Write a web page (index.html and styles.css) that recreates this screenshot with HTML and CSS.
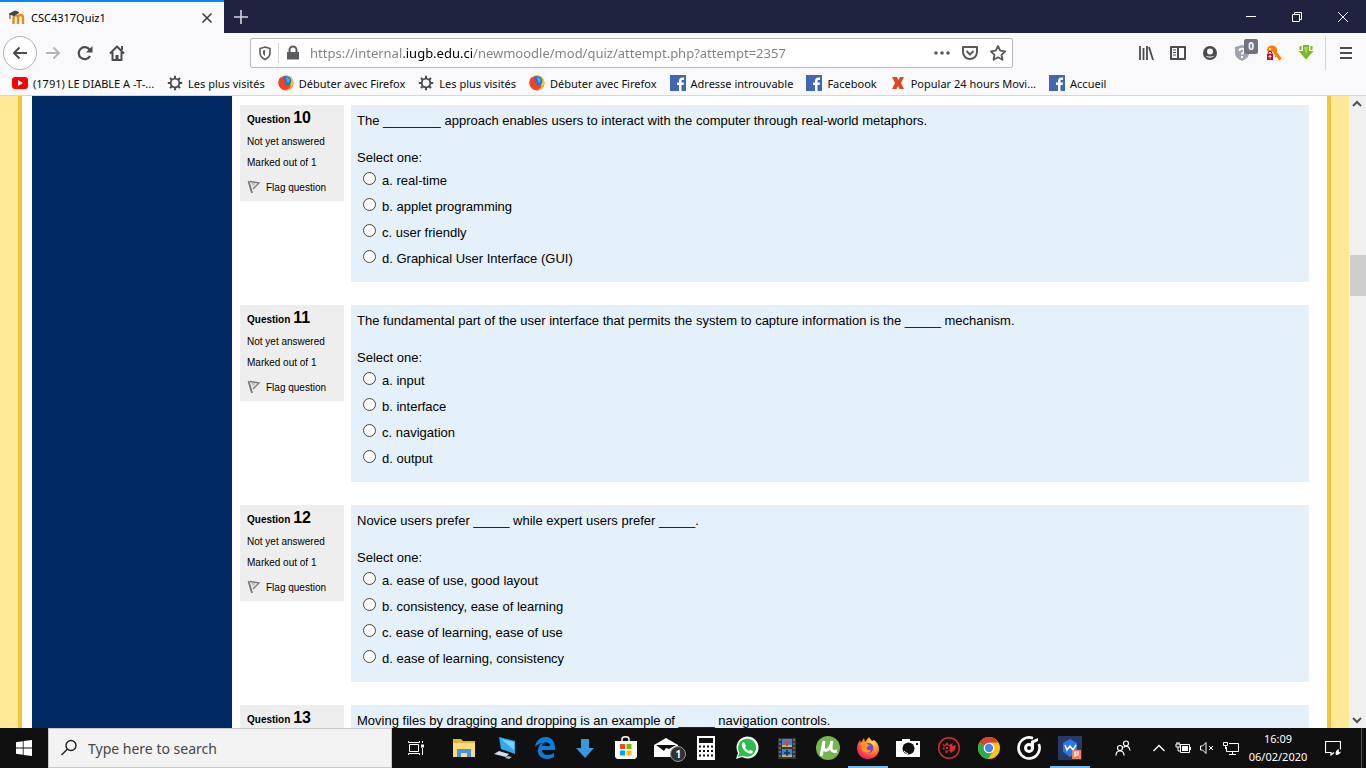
FILE: index.html
```html
<!DOCTYPE html>
<html lang="en">

  <head>
    <meta charset="utf-8">
    <title>CSC4317Quiz1</title>
    <link rel="stylesheet" href="styles.css">
  </head>

  <body>
    <!-- shared icons -->
    <svg class="icon-defs" aria-hidden="true">
      <defs>
        <radialGradient id="fox-body" cx="70%" cy="25%" r="85%">
          <stop offset="0" stop-color="#ffe14a"/>
          <stop offset=".45" stop-color="#ff9020"/>
          <stop offset=".8" stop-color="#fb3750"/>
          <stop offset="1" stop-color="#e31587"/>
        </radialGradient>
        <symbol id="icon-fox" viewBox="0 0 24 24">
          <path d="M12 23C5 23 1 18 1 12c0-4 2-6 3-8l1 2.500L8 2l1 4 4-5 3 4 2-1c3 2 5 5 5 9 0 6-5 10-11 10z" fill="url(#fox-body)"/>
          <circle cx="12.500" cy="12" r="5" fill="#7542e5"/>
          <path d="M3 8c3-2 6-2 8 0l3 1-3 2c-1 2 1 4 4 3 0 3-6 4-9 0-1-2-1-4 0-5z" fill="#ff9820"/>
        </symbol>
        <symbol id="icon-fox-old" viewBox="0 0 16 16">
          <circle cx="8" cy="8" r="7.500" fill="#f5552b"/>
          <path d="M8 .5c6 0 8 5 7 9-1 3-4 6-7 6 3-2 5-4 4-8z" fill="#ffc32b"/>
          <circle cx="8.500" cy="6" r="4.800" fill="#1c75d2"/>
          <path d="M8 2l4 2-1 4-2-1z" fill="#31b7ef"/>
          <path d="M1 4l2-2 1 2 3 1-1 2 3 1-2 2c1 2 4 2 6 0-1 5-8 6-11 2-2-2-2-5-1-8z" fill="#f4411f"/>
        </symbol>
        <symbol id="icon-gear" viewBox="0 0 16 16">
          <circle cx="8" cy="8" r="4.300" fill="none" stroke="#4a4a4f" stroke-width="1.800"/>
          <path d="M8 .8v3M8 12.200v3M.8 8h3M12.200 8h3M3 3l2 2M11 11l2 2M3 13l2-2M11 5l2-2" stroke="#4a4a4f" stroke-width="2"/>
        </symbol>
        <symbol id="icon-fb" viewBox="0 0 16 16">
          <path d="M0 0h16v16H0z" fill="#4267b2"/>
          <path d="M9 16v-6H7V7.500h2V6c0-2.200 1.300-3.500 3.300-3.500H14V5h-1.300C11.700 5 11.500 5.500 11.500 6.200v1.300H14l-.4 2.500h-2.100v6z" fill="#fff"/>
        </symbol>
        <symbol id="icon-flag" viewBox="0 0 14 14">
          <path d="M1.500 1L5 13" fill="none" stroke="#777" stroke-width="1.800"/>
          <path d="M3 1.500l9 1.500-6 6" fill="none" stroke="#777" stroke-width="1.300"/>
          <path d="M4.500 3l4 .5L6 6.500z" fill="#bbb"/>
        </symbol>
      </defs>
    </svg>

    <header class="browser">
      <div class="tab-strip">
        <div class="tab">
          <svg class="icon-16" viewBox="0 0 16 16">
            <path d="M4.500 14V8c0-3.500 4.500-3.500 4.500 0v6M9 14V8c0-4 5-4 5 0v6" fill="none" stroke="#e98b12" stroke-width="2.400"/>
            <path d="M0 4l6-3 4 1.500L5 5.500zM1 4v5" fill="#444" stroke="#444"/>
          </svg>
          <span class="tab-title">CSC4317Quiz1</span>
          <button class="tab-close" aria-label="Close tab">
            <svg class="icon-16" viewBox="0 0 16 16"><path d="M3.500 3.500l9 9m0-9l-9 9" stroke="#38383d" stroke-width="1.500"/></svg>
          </button>
        </div>
        <button class="new-tab" aria-label="New tab">
          <svg class="icon-16" viewBox="0 0 16 16"><path d="M8 1v14M1 8h14" stroke="#d5d5df" stroke-width="1.600"/></svg>
        </button>
        <div class="window-buttons">
          <button aria-label="Minimize"><svg viewBox="0 0 12 12"><path d="M1 5.500h10" stroke="#fff"/></svg></button>
          <button aria-label="Restore"><svg viewBox="0 0 12 12"><path d="M1.500 3.500h7v7h-7zM3.500 3.500v-2h7v7h-2" fill="none" stroke="#fff"/></svg></button>
          <button aria-label="Close"><svg viewBox="0 0 12 12"><path d="M1 1l10 10M11 1L1 11" stroke="#fff"/></svg></button>
        </div>
      </div>

      <nav class="toolbar">
        <button class="tool back" aria-label="Back">
          <svg viewBox="0 0 16 16"><path d="M15 8H2M7.500 2.500L2 8l5.500 5.500" fill="none" stroke="#4a4a4f" stroke-width="2"/></svg>
        </button>
        <button class="tool" aria-label="Forward">
          <svg viewBox="0 0 16 16"><path d="M1 8h13M8.500 2.500L14 8l-5.500 5.500" fill="none" stroke="#b5b5b9" stroke-width="2"/></svg>
        </button>
        <button class="tool" aria-label="Reload">
          <svg viewBox="0 0 16 16"><path d="M13 11A6 6 0 1 1 12.500 4.500" fill="none" stroke="#4a4a4f" stroke-width="2.200"/><path d="M15.500 1v6.500H9z" fill="#4a4a4f"/></svg>
        </button>
        <button class="tool" aria-label="Home">
          <svg viewBox="0 0 16 16"><path d="M1 8.500l7-7 7 7M3.500 7v8h9V7" fill="none" stroke="#4a4a4f" stroke-width="2" stroke-linejoin="round"/><path d="M6.500 10h3v5h-3zM12 1h2v4h-2z" fill="#4a4a4f"/></svg>
        </button>

        <div class="url-bar">
          <button class="url-icon shield" aria-label="Tracking protection">
            <svg viewBox="0 0 16 16"><path d="M8 2l5 1.500V8c0 3-2 5-5 6.500C5 13 3 11 3 8V3.500z" fill="none" stroke="#5a5a5e" stroke-width="1.600"/><path d="M8 5v6c-1.500-1-2-2-2-3V5.500z" fill="#5a5a5e"/></svg>
          </button>
          <button class="url-icon" aria-label="Site information">
            <svg viewBox="0 0 16 16"><path d="M2 7h12v7.500H2z" fill="#5a5a5e"/><path d="M4.500 8V5a3.500 3.500 0 0 1 7 0v3" fill="none" stroke="#5a5a5e" stroke-width="2"/></svg>
          </button>
          <input class="url-input" type="text" aria-label="Address" value="https://internal.iugb.edu.ci/newmoodle/mod/quiz/attempt.php?attempt=2357">
          <button class="url-icon" aria-label="Page actions">
            <svg viewBox="0 0 16 16"><g fill="#5a5a5e"><circle cx="2" cy="8" r="1.800"/><circle cx="8" cy="8" r="1.800"/><circle cx="14" cy="8" r="1.800"/></g></svg>
          </button>
          <button class="url-icon" aria-label="Save to Pocket">
            <svg viewBox="0 0 16 16"><path d="M1 2h14v5c0 4-3 7-7 7S1 11 1 7z" fill="none" stroke="#5a5a5e" stroke-width="2" stroke-linejoin="round"/><path d="M4.500 6L8 9.500 11.500 6" fill="none" stroke="#5a5a5e" stroke-width="2"/></svg>
          </button>
          <button class="url-icon" aria-label="Bookmark this page">
            <svg viewBox="0 0 16 16"><path d="M8 1l2.200 4.700 5 .6-3.700 3.500 1 5L8 12.300l-4.500 2.500 1-5L.8 6.300l5-.6z" fill="none" stroke="#5a5a5e" stroke-width="1.800" stroke-linejoin="round"/></svg>
          </button>
        </div>

        <button class="tool" aria-label="Library">
          <svg viewBox="0 0 16 16"><path d="M2 1v14M5.500 3v12M9 1v14M11 2l4 13" stroke="#4a4a4f" stroke-width="1.800"/></svg>
        </button>
        <button class="tool" aria-label="Sidebars">
          <svg viewBox="0 0 16 16"><path d="M1 2h14v12H1zM8 2v12" fill="none" stroke="#4a4a4f" stroke-width="2" stroke-linejoin="round"/><path d="M3 5h3M3 7.500h3M3 10h3" stroke="#4a4a4f"/></svg>
        </button>
        <button class="tool" aria-label="Account">
          <svg viewBox="0 0 16 16"><circle cx="8" cy="8" r="7" fill="#4a4a4f"/><circle cx="8" cy="6.500" r="3" fill="#f9f9fb"/><path d="M3.500 10.500c2 3 7 3 9 0-2 1.300-7 1.300-9 0z" fill="#f9f9fb"/></svg>
        </button>
        <button class="tool with-badge" aria-label="Tracker alerts">
          <svg viewBox="0 0 16 16"><path d="M8 0l7 2v6c0 4-3 6-7 8-4-2-7-4-7-8V2z" fill="#9fa3ae"/><path d="M5.500 6c0-3 5-3 5 0 0 1.500-2.500 1.500-2.500 3.500M8 11v2" fill="none" stroke="#fff" stroke-width="2"/></svg>
          <span class="badge">0</span>
        </button>
        <button class="tool" aria-label="Key manager">
          <svg viewBox="0 0 16 16"><path d="M8 6l6.500 8.500" stroke="#ff7a00" stroke-width="3"/><path d="M12 9l-3 3" stroke="#ff7a00" stroke-width="1.500"/><path d="M1 6V4c1-4 8-5 10 0v4H8L6 6z" fill="#ff7a00"/><circle cx="4" cy="4" r="1" fill="#fff"/><path d="M1 8.500h6V15H1z" fill="#c0092b"/><path d="M2.500 8V6.500h3V8" fill="none" stroke="#c0092b"/><path d="M4 10v3.500M2.500 11.500h3" stroke="#fff"/></svg>
        </button>
        <button class="tool" aria-label="Download helper">
          <svg viewBox="0 0 16 16"><path d="M5 0h6v6h4.500L8 14.500.5 6H5z" fill="#79b926"/><path d="M2.500 1v4M13.500 1v4" stroke="#79b926" stroke-width="2"/><path d="M6 2l2 8 2-8z" fill="#a7dc50"/></svg>
        </button>
        <button class="tool menu" aria-label="Menu">
          <svg viewBox="0 0 16 16"><path d="M2 3h12M2 8h12M2 13h12" stroke="#4a4a4f" stroke-width="2"/></svg>
        </button>
      </nav>

      <div class="bookmarks">
        <a href="#"><svg class="icon-16" viewBox="0 0 16 16"><rect y="2" width="16" height="12" rx="3" fill="#f00"/><path d="M6 5l5 3-5 3z" fill="#fff"/></svg>(1791) LE DIABLE A -T-...</a>
        <a href="#"><svg class="icon-16"><use href="#icon-gear"/></svg>Les plus visités</a>
        <a href="#"><svg class="icon-16"><use href="#icon-fox-old"/></svg>Débuter avec Firefox</a>
        <a href="#"><svg class="icon-16"><use href="#icon-gear"/></svg>Les plus visités</a>
        <a href="#"><svg class="icon-16"><use href="#icon-fox-old"/></svg>Débuter avec Firefox</a>
        <a href="#"><svg class="icon-16"><use href="#icon-fb"/></svg>Adresse introuvable</a>
        <a href="#"><svg class="icon-16"><use href="#icon-fb"/></svg>Facebook</a>
        <a href="#"><svg class="icon-16" viewBox="0 0 16 16"><path d="M2 2h5l1.500 3L10 2h4l-3 6 3 6H9.500L8 11l-1.500 3H2l3-6z" fill="#dc4a24"/></svg>Popular 24 hours Movi...</a>
        <a href="#"><svg class="icon-16"><use href="#icon-fb"/></svg>Accueil</a>
      </div>
    </header>

    <div class="viewport">
      <div class="page-edge left"></div>
      <aside class="sidebar"></aside>

      <main class="quiz">
        <section class="question">
          <div class="info">
            <h3>Question <span class="number">10</span></h3>
            <p>Not yet answered</p>
            <p>Marked out of 1</p>
            <a class="flag" href="#"><svg><use href="#icon-flag"/></svg>Flag question</a>
          </div>
          <div class="content">
            <p class="text">The ________ approach enables users to interact with the computer through real-world metaphors.</p>
            <p class="prompt">Select one:</p>
            <label><input type="radio" name="q10">a. real-time</label>
            <label><input type="radio" name="q10">b. applet programming</label>
            <label><input type="radio" name="q10">c. user friendly</label>
            <label><input type="radio" name="q10">d. Graphical User Interface (GUI)</label>
          </div>
        </section>

        <section class="question">
          <div class="info">
            <h3>Question <span class="number">11</span></h3>
            <p>Not yet answered</p>
            <p>Marked out of 1</p>
            <a class="flag" href="#"><svg><use href="#icon-flag"/></svg>Flag question</a>
          </div>
          <div class="content">
            <p class="text">The fundamental part of the user interface that permits the system to capture information is the _____ mechanism.</p>
            <p class="prompt">Select one:</p>
            <label><input type="radio" name="q11">a. input</label>
            <label><input type="radio" name="q11">b. interface</label>
            <label><input type="radio" name="q11">c. navigation</label>
            <label><input type="radio" name="q11">d. output</label>
          </div>
        </section>

        <section class="question">
          <div class="info">
            <h3>Question <span class="number">12</span></h3>
            <p>Not yet answered</p>
            <p>Marked out of 1</p>
            <a class="flag" href="#"><svg><use href="#icon-flag"/></svg>Flag question</a>
          </div>
          <div class="content">
            <p class="text">Novice users prefer _____ while expert users prefer _____.</p>
            <p class="prompt">Select one:</p>
            <label><input type="radio" name="q12">a. ease of use, good layout</label>
            <label><input type="radio" name="q12">b. consistency, ease of learning</label>
            <label><input type="radio" name="q12">c. ease of learning, ease of use</label>
            <label><input type="radio" name="q12">d. ease of learning, consistency</label>
          </div>
        </section>

        <section class="question">
          <div class="info">
            <h3>Question <span class="number">13</span></h3>
          </div>
          <div class="content">
            <p class="text">Moving files by dragging and dropping is an example of _____ navigation controls.</p>
          </div>
        </section>
      </main>

      <div class="page-edge right"></div>
      <div class="scrollbar">
        <svg viewBox="0 0 16 16"><path d="M4 10l4-4 4 4" fill="none" stroke="#505050" stroke-width="2"/></svg>
        <div class="thumb"></div>
        <svg class="down" viewBox="0 0 16 16"><path d="M4 6l4 4 4-4" fill="none" stroke="#505050" stroke-width="2"/></svg>
      </div>
    </div>

    <footer class="taskbar">
      <button class="start" aria-label="Start">
        <svg class="icon-16" viewBox="0 0 16 16"><path d="M0 2.200l6.800-1v6.400H0zM7.600 1.100L16 0v7.600H7.600zM0 8.400h6.800v6.400l-6.800-1zM7.600 8.400H16V16l-8.400-1.100z" fill="#fff"/></svg>
      </button>
      <label class="search">
        <svg viewBox="0 0 18 18"><circle cx="11" cy="6.500" r="5" fill="none" stroke="#222" stroke-width="1.400"/><path d="M7.500 10L1.500 16" stroke="#222" stroke-width="1.400"/></svg>
        <input type="text" placeholder="Type here to search" aria-label="Search">
      </label>
      <button class="task-view" aria-label="Task view">
        <svg class="icon-16" viewBox="0 0 16 16"><path d="M1.500 4.500h9v7h-9zM.5 1v1.500h11V1M.5 15v-1.500h11V15M14.500 1v2M14.500 8v7" fill="none" stroke="#fff"/><path d="M13 4.500h3v3h-3z" fill="#fff"/></svg>
      </button>

      <div class="apps">
        <button aria-label="File Explorer"><svg viewBox="0 0 24 24"><path d="M1 3h8l2 2h12v16H1z" fill="#e8b33c"/><path d="M1 7h22v14H1z" fill="#ffdc7a"/><path d="M5 21v-8h14v8h-4v-4H9v4z" fill="#4596d8"/></svg></button>
        <button aria-label="This PC"><svg viewBox="0 0 24 24"><path d="M6 1l16 4v13L8 13z" fill="#31a8e8"/><path d="M8 3l13 3v8z" fill="#7bd0f7"/><path d="M6 15l10 3-3 3-12-3z" fill="#d5dce2"/><path d="M15 20l4 1-3 2-4-1z" fill="#aab5bd"/></svg></button>
        <button aria-label="Edge"><svg viewBox="0 0 24 24"><path d="M2 11C3 4 8 1 13 1c6 0 9 5 9 11v2H9c0 6 8 6 12 3v4c-6 4-16 2-16-6 0-4 2-7 5-8-4 0-7 3-8 4zM9 10h8c0-5-7-5-8 0z" fill="#0c7cd5"/></svg></button>
        <button aria-label="Downloads"><svg viewBox="0 0 24 24"><path d="M8 3h8v9h5l-9 10-9-10h5z" fill="#3a96dd"/></svg></button>
        <button aria-label="Store"><svg viewBox="0 0 24 24"><path d="M1 5h22v16l-2 2H3l-2-2z" fill="#fff"/><path d="M8 6V3c0-3 7-3 7 0v3" fill="none" stroke="#fff" stroke-width="1.500"/><path d="M6 8h5v5H6z" fill="#f04e1f"/><path d="M12.500 8h5v5h-5z" fill="#7eb900"/><path d="M6 14.500h5v5H6z" fill="#00a3ee"/><path d="M12.500 14.500h5v5h-5z" fill="#feb800"/></svg></button>
        <button class="with-badge" aria-label="Mail"><svg viewBox="0 0 24 24"><path d="M0 9l12-7 12 7v12H0z" fill="#fff"/><path d="M2 9h20l-7 4-3-1-2 3z" fill="#111"/></svg><span class="badge round">1</span></button>
        <button aria-label="Calculator"><svg viewBox="0 0 24 24"><path d="M3 0h18v24H3z" fill="#fff"/><path d="M5 2h14v5H5z" fill="#111"/><path d="M5 10.500h14M5 15h14M5 19.500h14" stroke="#111" stroke-width="2.200" stroke-dasharray="2 2"/></svg></button>
        <button aria-label="WhatsApp"><svg viewBox="0 0 24 24"><path d="M1 23l2-6A11 11 0 1 1 7 21z" fill="#fff"/><path d="M3 21l1.500-4.500A9 9 0 1 1 8 19.700z" fill="#2bbd4b"/><path d="M7 7l2-1 2 4-1 1c1 2 2 3 4 4l1-1 3 1c0 3-3 3-5 2-4-2-7-6-6-10z" fill="#fff"/></svg></button>
        <button aria-label="Video"><svg viewBox="0 0 24 24"><path d="M3 2h18v21H3z" fill="#373737"/><path d="M7 3h10v8H7zM7 13h10v8H7z" fill="#3d80e0"/><path d="M7 9h10v2H7zM7 19h10v2H7z" fill="#d4b443"/><path d="M12 5v5M9 7h6" stroke="#db4638" stroke-width="2"/><path d="M12 14v6M9 17h6" stroke="#222b3d" stroke-width="1.500"/><path d="M5 3v20M19 3v20" stroke="#999" stroke-dasharray="2"/></svg></button>
        <button aria-label="uTorrent"><svg viewBox="0 0 24 24"><circle cx="12" cy="12" r="12" fill="#73b84b"/><path d="M8 5L5 20M8 5c-3 13 6 12 8 0M16 5c-2 8-1 12 5 10" fill="none" stroke="#fff" stroke-width="3"/></svg></button>
        <button class="active" aria-label="Firefox"><svg><use href="#icon-fox"/></svg></button>
        <button aria-label="Camera"><svg viewBox="0 0 24 24"><path d="M0 5h6V3h8v2h10v16H0z" fill="#fff"/><circle cx="12.500" cy="12.500" r="6" fill="#111"/><path d="M8 15a5 5 0 0 0 4 2.500" fill="none" stroke="#fff"/><path d="M20 7h2v2h-2z" fill="#111"/></svg></button>
        <button aria-label="Game optimizer"><svg viewBox="0 0 24 24"><circle cx="12" cy="12" r="10.300" fill="none" stroke="#d92b2e" stroke-width="1.500"/><path d="M5 8l3 1 2-3 2 3 4-2-1 3 4-1-1 5-4 3-2-3-3 4-1-4-3-1 2-2z" fill="#d92b2e"/><circle cx="10" cy="12" r="2" fill="none" stroke="#111" stroke-width="1.500"/></svg></button>
        <button aria-label="Chrome"><svg viewBox="0 0 24 24"><circle cx="12" cy="12" r="11" fill="#fbc116"/><path d="M12 12L2.500 6.500A11 11 0 0 1 21.500 6.500H12z" fill="#e33b2e"/><path d="M12 12L2.500 6.500A11 11 0 0 0 11 23l5-8z" fill="#2da94f"/><circle cx="12" cy="12" r="5.300" fill="#fff"/><circle cx="12" cy="12" r="4.200" fill="#4285f4"/></svg></button>
        <button aria-label="Groove Music"><svg viewBox="0 0 24 24"><path d="M16 2.200A10.500 10.500 0 1 0 21.800 8" fill="none" stroke="#fff" stroke-width="2.600"/><circle cx="12" cy="12" r="3.500" fill="none" stroke="#fff" stroke-width="3"/><path d="M14 12V5l7-3v3l-4 2v5z" fill="#fff"/></svg></button>
        <button class="active" aria-label="WPS Office"><svg viewBox="0 0 24 24"><path d="M0 0h24v24H0z" fill="#263a68"/><path d="M12 3l7 4v9l-7 5-7-5V7z" fill="#2878e8"/><path d="M7 9l2 5 3-4 3 4 3-5" fill="none" stroke="#fff" stroke-width="1.500"/><path d="M14 14h9v9h-9z" fill="#f08060"/><path d="M17 21v-5h3v3h-3" fill="none" stroke="#fff" stroke-width="1.200"/></svg></button>
      </div>

      <div class="tray">
        <button class="people" aria-label="People"><svg class="icon-16" viewBox="0 0 16 16"><g fill="none" stroke="#fff" stroke-width="1.200"><circle cx="5" cy="8" r="2.500"/><path d="M1 15.500c0-6 8-6 8 0"/><circle cx="11" cy="3.500" r="2.500"/><path d="M8.500 7.500c3-3 6-1 6.500 3"/></g></svg></button>
        <button aria-label="Hidden icons"><svg class="icon-16" viewBox="0 0 16 16"><path d="M2.500 11L8 5.500l5.500 5.500" fill="none" stroke="#fff" stroke-width="1.300"/></svg></button>
        <button aria-label="Battery"><svg class="icon-16" viewBox="0 0 16 16"><path d="M5.500 4.500h9v8h-9zM1 4h4v3H1zM2 2v2M4 2v2M3 7v4h2" fill="none" stroke="#fff"/><path d="M7 6h6v5H7zM15 7h1v3h-1z" fill="#fff"/></svg></button>
        <button aria-label="Volume muted"><svg class="icon-16" viewBox="0 0 16 16"><path d="M1.500 6h2L7 2.500v11L3.500 10h-2zM10 6l4 4M14 6l-4 4" fill="none" stroke="#fff"/></svg></button>
        <button aria-label="Network"><svg class="icon-16" viewBox="0 0 16 16"><path d="M6 3.500h9.500v8H3.500V7M9.500 12v2.500M6 14.500h7M.5 2.500h4v3h-4zM2.500 6v3" fill="none" stroke="#fff"/></svg></button>
        <button class="clock"><span>16:09</span><span>06/02/2020</span></button>
        <button class="notifications" aria-label="Notifications"><svg class="icon-16" viewBox="0 0 16 16"><path d="M9 12.500L6 15v-2.500H.5v-11h15v8" fill="none" stroke="#fff" stroke-width="1.200"/><path d="M14 9c-3 1-4 4-3 6 3 0 5-2 5-4-1 2-3 2-2-2z" fill="#fff"/></svg></button>
      </div>
    </footer>
  </body>

</html>
```
FILE: styles.css
```css
*{
  box-sizing: border-box;
}

body{
  margin: 0;
  height: 100vh;
  display: flex;
  flex-direction: column;
  overflow: hidden;
  background-color: white;
  color: black;
  font-family: "Liberation Sans", Arial, sans-serif;
  font-size: 13px;
}

button{
  display: flex;
  align-items: center;
  justify-content: center;
  padding: 0;
  border: none;
  background-color: transparent;
  font-family: inherit;
  cursor: pointer;
}

svg{
  display: block;
  flex-shrink: 0;
}

.icon-defs{
  position: absolute;
  width: 0;
  height: 0;
}

.icon-16{
  width: 16px;
  height: 16px;
}

/* browser window */
.browser{
  flex-shrink: 0;
  background-color: rgb(249, 249, 251);
  border-bottom: 1px solid rgb(214, 214, 218);
  font-family: "Noto Sans", sans-serif;
}

.tab-strip{
  display: flex;
  height: 33px;
  background-color: rgb(32, 35, 63);
}

.tab{
  display: flex;
  align-items: center;
  width: 224px;
  padding: 0 9px;
  gap: 6px;
  background-color: rgb(249, 249, 251);
  border-top: 2px solid rgb(10, 132, 255);
  font-size: 11px;
}

.tab-title{
  flex: 1;
}

.new-tab{
  width: 33px;
}

.window-buttons{
  display: flex;
  margin-left: auto;
}

.window-buttons button{
  width: 46px;
}

.window-buttons svg{
  width: 12px;
  height: 12px;
}

.toolbar{
  display: flex;
  align-items: center;
  height: 40px;
  padding-left: 3px;
}

.tool{
  width: 32px;
  height: 34px;
}

.tool svg{
  width: 16px;
  height: 16px;
}

.back{
  width: 34px;
  border: 1px solid rgb(177, 177, 177);
  border-radius: 17px;
  background-color: white;
}

.with-badge{
  position: relative;
}

.badge{
  position: absolute;
  top: 3px;
  right: 0;
  width: 14px;
  height: 15px;
  border-radius: 2px;
  background-color: rgb(115, 115, 125);
  color: white;
  font-size: 10px;
  font-weight: bold;
  line-height: 15px;
  text-align: center;
}

.menu{
  width: 41px;
  height: 34px;
  margin-left: 3px;
  border-left: 1px solid rgb(214, 214, 218);
}

.url-bar{
  flex: 1;
  display: flex;
  align-items: center;
  height: 30px;
  margin: 0 117px;
  border: 1px solid rgb(184, 184, 188);
  border-radius: 2px;
  background-color: white;
}

.url-icon{
  width: 28px;
  height: 20px;
}

.url-icon svg{
  width: 16px;
  height: 16px;
}

.shield{
  border-right: 1px solid rgb(214, 214, 218);
}

/* the domain is darker than the rest of the address */
.url-input{
  flex: 1;
  min-width: 0;
  padding: 0 0 0 3px;
  border: none;
  outline: none;
  background-image: linear-gradient(to right, rgb(125, 125, 130) 97px, black 97px, black 165px, rgb(125, 125, 130) 165px);
  background-clip: text;
  -webkit-background-clip: text;
  color: transparent;
  font-family: inherit;
  font-size: 13px;
}

.bookmarks{
  display: flex;
  align-items: center;
  gap: 13px;
  height: 22px;
  padding: 0 0 2px 12px;
  font-size: 11px;
  white-space: nowrap;
}

.bookmarks a{
  display: flex;
  align-items: center;
  gap: 5px;
  color: rgb(12, 12, 13);
  text-decoration: none;
}

/* moodle page */
.viewport{
  flex: 1;
  display: flex;
  min-height: 0;
  overflow: hidden;
}

.page-edge{
  width: 22px;
  flex-shrink: 0;
  background-color: rgb(255, 233, 150);
}

.left{
  border-right: 4px solid rgb(240, 197, 62);
}

.right{
  border-left: 4px solid rgb(240, 197, 62);
}

.sidebar{
  width: 200px;
  flex-shrink: 0;
  margin-left: 10px;
  background-color: rgb(0, 40, 98);
}

.quiz{
  flex: 1;
  display: flex;
  flex-direction: column;
  gap: 23px;
  padding: 9px 18px 0 8px;
}

.question{
  display: flex;
  flex-shrink: 0;
  align-items: flex-start;
  gap: 7px;
}

.info{
  width: 104px;
  min-height: 96px;
  padding: 4px 7px 2px;
  background-color: rgb(238, 238, 238);
  font-size: 10px;
}

.info h3{
  margin: 0;
  font-size: 10px;
  line-height: 22px;
}

.number{
  font-size: 16px;
  line-height: 16px;
}

.info p{
  margin: 0;
  line-height: 21px;
}

.flag{
  display: flex;
  align-items: center;
  gap: 5px;
  height: 24px;
  margin-top: 2px;
  color: black;
  text-decoration: none;
}

.flag svg{
  width: 14px;
  height: 14px;
}

.content{
  flex: 1;
  min-height: 177px;
  padding: 6px;
  background-color: rgb(228, 240, 250);
}

.text{
  margin: 0 0 18px;
  line-height: 20px;
}

.prompt{
  margin: 0;
  line-height: 18px;
}

.content label{
  display: flex;
  align-items: center;
  gap: 6px;
  height: 26px;
  padding-left: 6px;
}

.content input{
  appearance: none;
  width: 13px;
  height: 13px;
  margin: 0 0 4px;
  border: 1px solid rgb(70, 70, 70);
  border-radius: 50%;
  background-color: white;
}

.scrollbar{
  display: flex;
  flex-direction: column;
  width: 17px;
  flex-shrink: 0;
  background-color: rgb(240, 240, 240);
}

.scrollbar svg{
  width: 16px;
  height: 16px;
}

.thumb{
  height: 41px;
  margin: 143px 0 auto 1px;
  background-color: rgb(205, 205, 205);
}

/* windows taskbar */
.taskbar{
  display: flex;
  flex-shrink: 0;
  height: 40px;
  background-color: rgb(16, 16, 16);
  color: white;
  font-family: "Noto Sans", sans-serif;
}

.start{
  width: 48px;
}

.search{
  display: flex;
  align-items: center;
  gap: 10px;
  width: 344px;
  padding-left: 11px;
  border: 1px solid rgb(200, 200, 200);
  background-color: rgb(243, 243, 243);
}

.search svg{
  width: 18px;
  height: 18px;
}

.search input{
  flex: 1;
  padding: 0;
  border: none;
  outline: none;
  background-color: transparent;
  font-family: inherit;
  font-size: 14px;
}

.search input::placeholder{
  color: rgb(70, 70, 70);
}

.task-view{
  width: 52px;
  padding-right: 4px;
}

.apps{
  display: flex;
  width: 646px;
}

.apps button{
  flex: 1;
}

.apps svg{
  width: 24px;
  height: 24px;
}

.apps .active{
  box-shadow: inset 0 -2px rgb(118, 185, 237);
}

.round{
  top: 18px;
  right: 0;
  width: 16px;
  height: 16px;
  border: 1px solid rgb(150, 150, 150);
  border-radius: 8px;
  background-color: rgb(50, 50, 50);
  line-height: 14px;
}

.tray{
  display: flex;
  margin-left: auto;
  padding-right: 8px;
  border-right: 1px solid rgb(80, 80, 80);
  margin-right: 4px;
}

.tray button{
  width: 24px;
}

.tray .people{
  width: 48px;
}

.tray .clock{
  flex-direction: column;
  width: 70px;
  color: white;
  font-size: 11px;
  line-height: 18px;
}

.tray .notifications{
  width: 40px;
}
```
